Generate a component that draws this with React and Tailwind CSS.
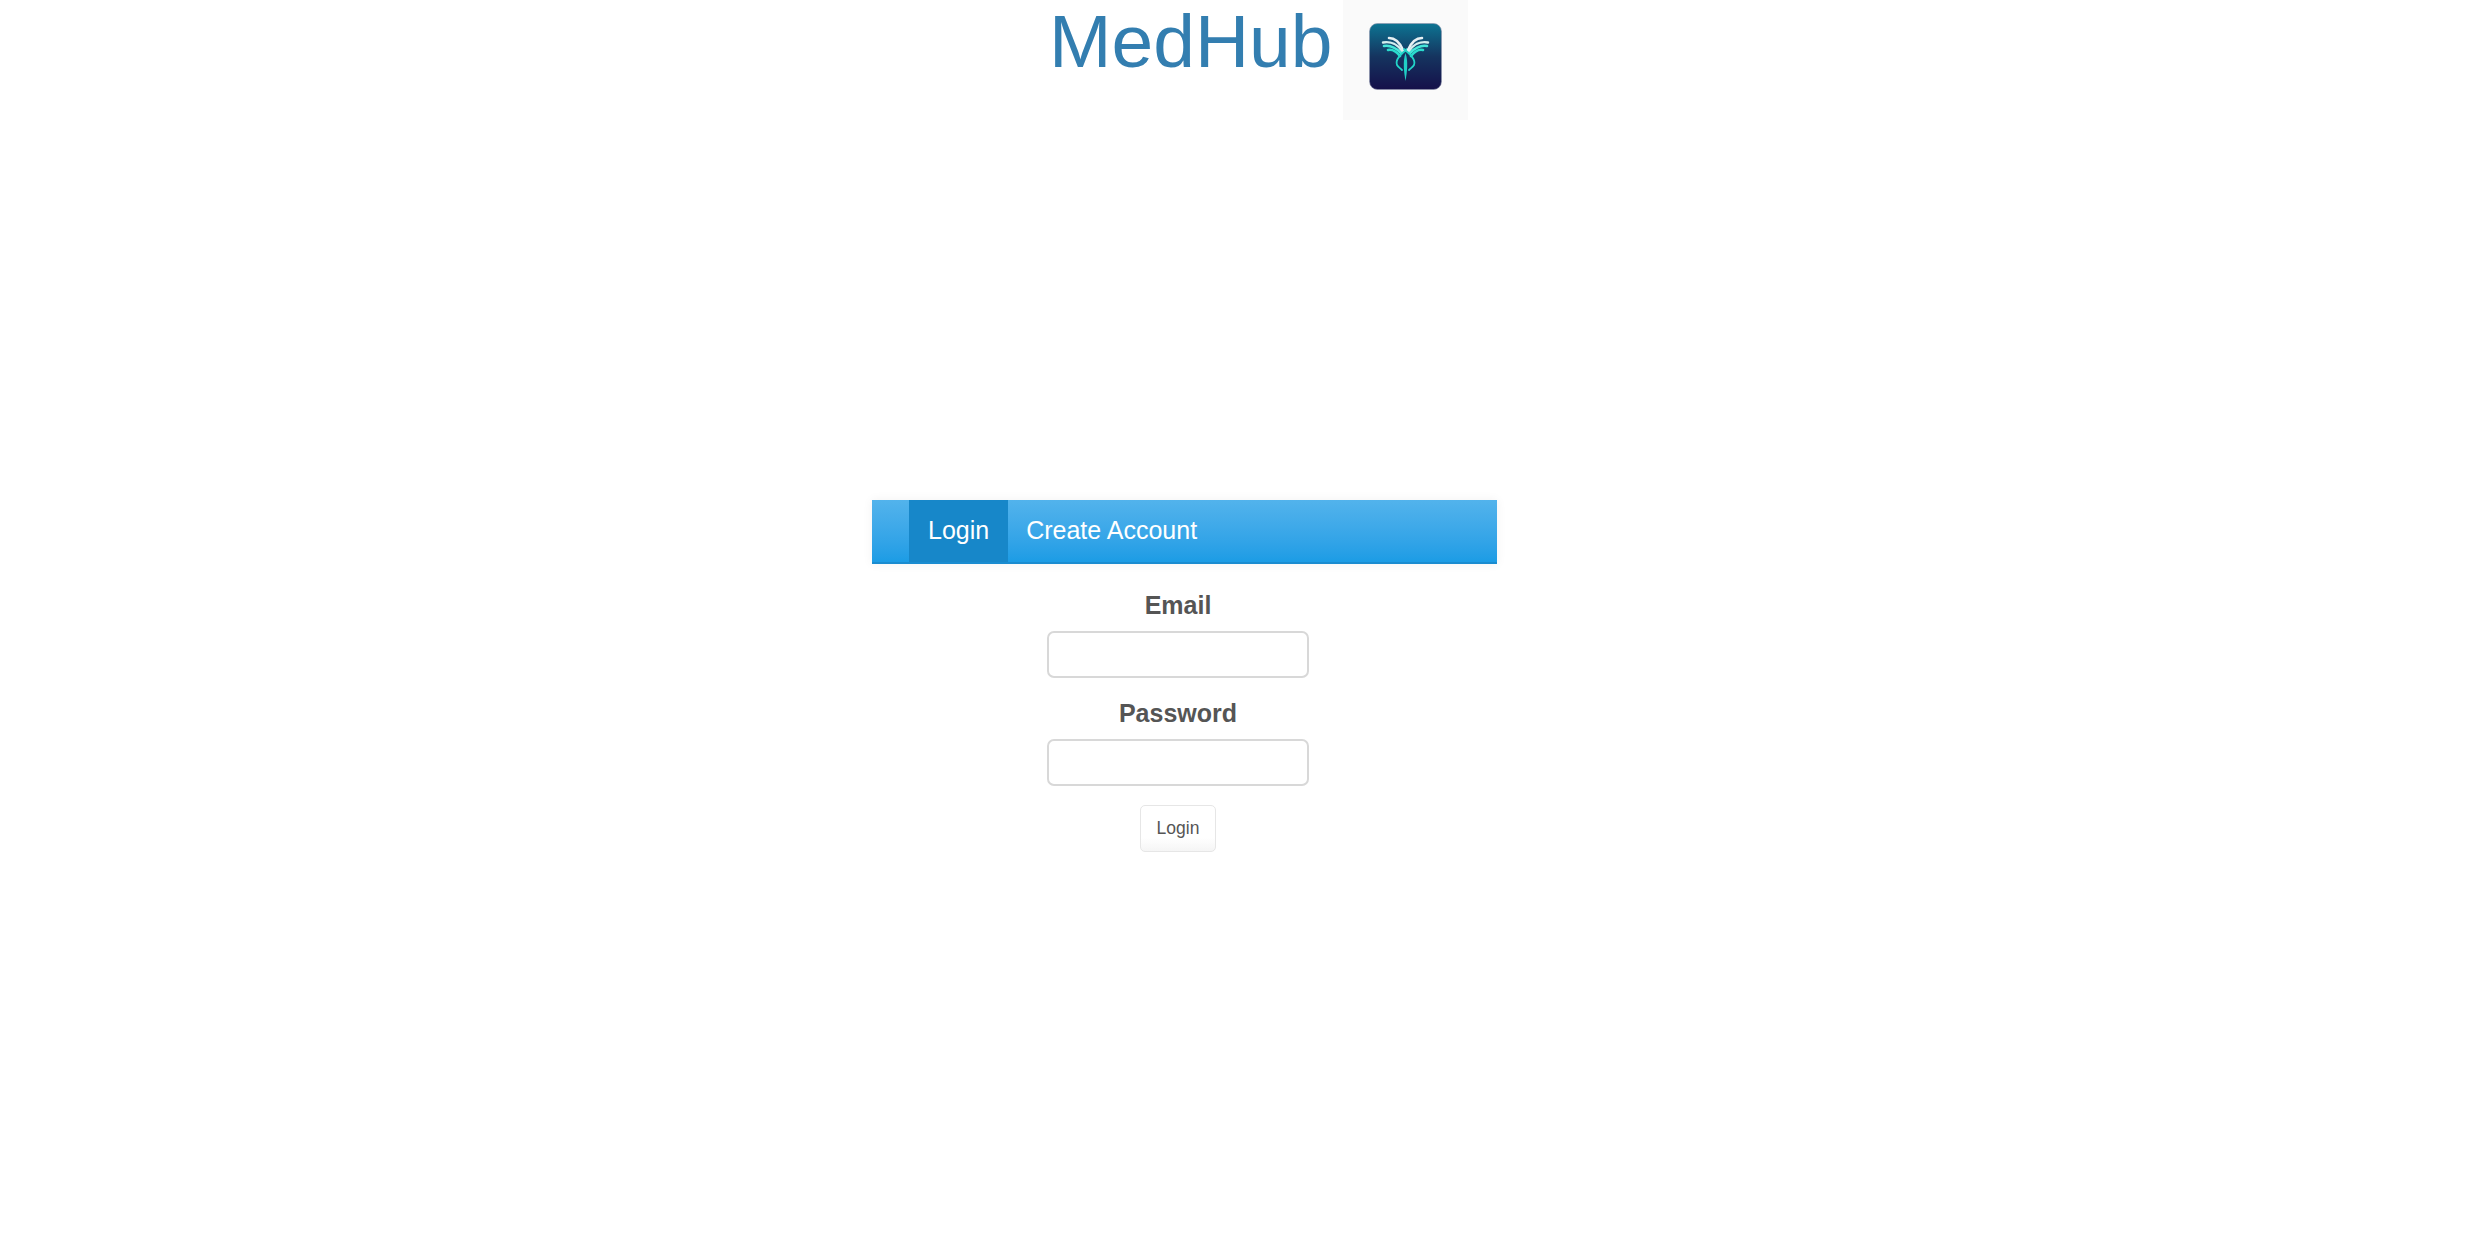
const Wing = () => (
    <g fill="none" strokeLinecap="round">
        <path d="M34 27C31 20 26 15 20 15" stroke="#e8f0f3" strokeWidth="2.600" />
        <path d="M33 28C29 22 22 18 14 19.500" stroke="#d3eeee" strokeWidth="2.400" />
        <path d="M32 30C27 25 21 22 15 23" stroke="#45e6d8" strokeWidth="2.600" />
        <path d="M31 33C27 28 23 26 19 27" stroke="#2adccd" strokeWidth="2.600" />
        <path d="M38 26C31 32 26 37 28 42C29 44 31 45 33 47" stroke="#22d5c9" strokeWidth="1.800" />
    </g>
);

const Logo = () => (
    <svg viewBox="0 0 73 67" className="w-[73px] h-[67px]">
        <defs>
            <linearGradient id="bg" x1="0" y1="0" x2="0" y2="1">
                <stop offset="0" stopColor="#0d7492" />
                <stop offset="0.5" stopColor="#15345f" />
                <stop offset="1" stopColor="#15104a" />
            </linearGradient>
        </defs>
        <rect x="0.5" y="0.5" width="72" height="66" rx="8" fill="url(#bg)" stroke="#8d93ad" strokeWidth="0.6" />
        <Wing />
        <g transform="translate(73,0) scale(-1,1)">
            <Wing />
        </g>
        <path d="M36.500 30C33.500 39 35 49 36.500 58C38 49 39.500 39 36.500 30Z" fill="#20cfc6" />
    </svg>
);

function App() {
    return (
        <div className="min-h-[1257px] bg-white font-['Liberation_Sans',Arial,sans-serif]">
            {/* Header */}
            <header className="flex h-[120px] pl-[1049px]">
                <h1 className="w-[294px] text-[75px] leading-[82px] text-[#337eb0] font-normal">MedHub</h1>
                <div className="w-[125px] h-[120px] bg-[#fafafa] pt-[23px] pl-[26px]">
                    <Logo />
                </div>
            </header>

            <main className="ml-[872px] mt-[380px] w-[625px]">
                {/* Nav bar */}
                <nav className="flex h-[64px] pl-[37px] bg-gradient-to-b from-[#52b3ec] to-[#1b9ce5] border-b-2 border-[#1a8cd0] shadow-[0_0_10px_rgba(0,0,0,0.06)] text-[25px] text-white">
                    <a className="flex items-center pl-[19px] pr-[19px] bg-[#1787c9]">Login</a>
                    <a className="flex items-center pl-[18px] pr-[19px]">Create Account</a>
                </nav>

                {/* Login form */}
                <form className="flex flex-col items-center pr-[13px] pt-[23px] text-[#555]">
                    <label className="text-[25px] leading-[36px] font-bold">Email</label>
                    <input className="w-[262px] h-[47px] mt-[8px] rounded-[7px] border-2 border-[#d8d8d8] bg-white" />
                    <label className="text-[25px] leading-[36px] font-bold mt-[17px]">Password</label>
                    <input type="password" className="w-[262px] h-[47px] mt-[8px] rounded-[7px] border-2 border-[#d8d8d8] bg-white" />
                    <button type="button" className="w-[76px] h-[47px] mt-[19px] rounded-[5px] border border-[#e6e6e6] bg-gradient-to-b from-white from-70% to-[#f5f5f5] text-[17.500px] text-[#555]">
                        Login
                    </button>
                </form>
            </main>
        </div>
    );
}

export default App;
